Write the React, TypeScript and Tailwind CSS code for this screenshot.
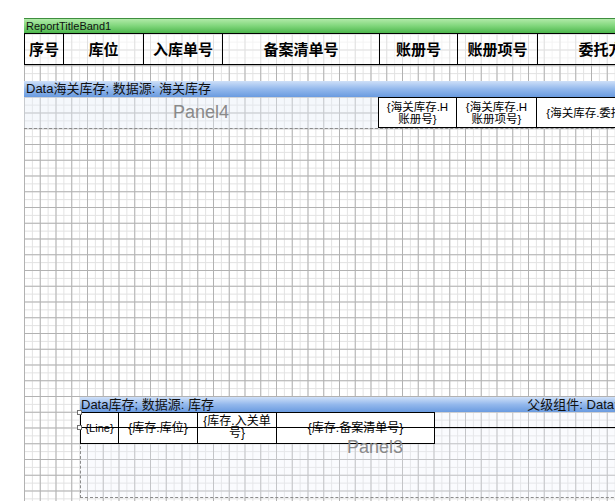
import React from "react";

const grid =
  "bg-white [background-image:linear-gradient(to_right,#b2b2b2_1px,transparent_1px),linear-gradient(to_bottom,#b2b2b2_1px,transparent_1px),linear-gradient(to_right,#e2e2e2_1px,transparent_1px),linear-gradient(to_bottom,#e2e2e2_1px,transparent_1px)] [background-size:15.75px_15.75px,15.75px_15.75px,7.875px_7.875px,7.875px_7.875px]";

const cjk = "font-['Noto_Sans_CJK_SC',sans-serif]";
const latin = "font-['Liberation_Sans','Noto_Sans_CJK_SC',sans-serif]";

function HeadCell({ w, children }: { w: string; children: React.ReactNode }) {
  return (
    <div
      className={`${w} shrink-0 h-full border-r border-black bg-white/60 flex items-center justify-center text-[15px] font-bold text-black whitespace-nowrap ${cjk}`}
    >
      {children}
    </div>
  );
}

function DataCell({ w, children, cls = "" }: { w: string; children: React.ReactNode; cls?: string }) {
  return (
    <div
      className={`${w} shrink-0 h-full border-r border-black bg-white flex items-center justify-center text-center text-[11.5px] leading-[12px] text-black ${latin} ${cls}`}
    >
      {children}
    </div>
  );
}

export default function App() {
  return (
    <div className="w-[615px] h-[501px] overflow-hidden bg-white">
      <div className={`ml-[24px] mt-[18px] w-[700px] h-[483px] ${grid}`}>
        {/* ReportTitleBand1 */}
        <div
          className={`h-[15px] bg-gradient-to-b from-[#b0eaa8] via-[#7fd67b] to-[#4cb64c] border-t border-[#3f8f3f] text-[11px] leading-[14px] pl-[2px] text-[#101010] ${latin}`}
        >
          ReportTitleBand1
        </div>
        {/* header row */}
        <div className="flex h-[32px] border-t border-b border-l border-black">
          <HeadCell w="w-[39px]">序号</HeadCell>
          <HeadCell w="w-[80px]">库位</HeadCell>
          <HeadCell w="w-[79px]">入库单号</HeadCell>
          <HeadCell w="w-[157px]">备案清单号</HeadCell>
          <HeadCell w="w-[78px]">账册号</HeadCell>
          <HeadCell w="w-[80px]">账册项号</HeadCell>
          <HeadCell w="w-[157px]">委托方名称</HeadCell>
        </div>
        <div className="h-[16px]" />
        {/* Data band */}
        <div
          className={`h-[16px] bg-gradient-to-b from-[#cfe0f8] via-[#93b8ec] to-[#6a9be0] text-[13px] leading-[15px] pl-[2px] text-[#101010] whitespace-nowrap ${latin}`}
        >
          Data海关库存; 数据源: 海关库存
        </div>
        {/* Panel4 row */}
        <div className="flex h-[32px] border-b border-dashed border-[#8c8c8c] bg-[#e6edf8]/40">
          <div className={`w-[354px] shrink-0 flex items-center justify-center text-[18px] text-[#8a8a8a] ${latin}`}>
            Panel4
          </div>
          <div className="flex h-[31px] border-l border-t border-b border-black">
            <DataCell w="w-[78px]">
              {"{海关库存.H"}
              <br />
              {"账册号}"}
            </DataCell>
            <DataCell w="w-[80px]">
              {"{海关库存.H"}
              <br />
              {"账册项号}"}
            </DataCell>
            <DataCell w="w-[157px]" cls="whitespace-nowrap">
              {"{海关库存.委托方企业名称}"}
            </DataCell>
          </div>
        </div>
        <div className="h-[268px]" />
        {/* lower Data band and Panel3 */}
        <div className="ml-[56px] relative">
          <div
            className={`w-[590px] h-[15px] flex bg-gradient-to-b from-[#cfe0f8] via-[#93b8ec] to-[#6a9be0] text-[13px] leading-[15px] pl-[1px] pr-[4px] text-[#101010] whitespace-nowrap ${latin}`}
          >
            <span>Data库存; 数据源: 库存</span>
            <span className="ml-auto">父级组件: Data海关库存</span>
          </div>
          <div className="h-[86px] border-l border-b border-dashed border-[#8c8c8c] bg-[#eef3fb]/30">
            <div className="flex w-fit h-[32px] border-t border-b border-black -ml-px border-l border-l-black">
              <DataCell w="w-[38px]" cls="text-[11px]">
                {"{Line}"}
              </DataCell>
              <DataCell w="w-[79px]" cls="text-[12px]">
                {"{库存.库位}"}
              </DataCell>
              <DataCell w="w-[79px]" cls="text-[12px] leading-[12px] items-start pt-[2px]">
                {"{库存.入关单"}
                <br />
                {"号}"}
              </DataCell>
              <DataCell w="w-[158px]" cls="text-[12px]">
                {"{库存.备案清单号}"}
              </DataCell>
            </div>
            <div className={`ml-[244px] -mt-[6px] w-[100px] text-center text-[18px] leading-[18px] text-[#8a8a8a] ${latin} relative`}>
              Panel3
            </div>
          </div>
          {/* line object across the row */}
          <div className="absolute left-[1px] top-[30px] w-[600px] h-px bg-black" />
          {/* selection handles */}
          <div className="absolute left-[-3px] top-[13px] w-[5px] h-[5px] bg-white border border-[#707070]" />
          <div className="absolute left-[-3px] top-[28px] w-[5px] h-[5px] bg-white border border-[#707070]" />
        </div>
      </div>
    </div>
  );
}
